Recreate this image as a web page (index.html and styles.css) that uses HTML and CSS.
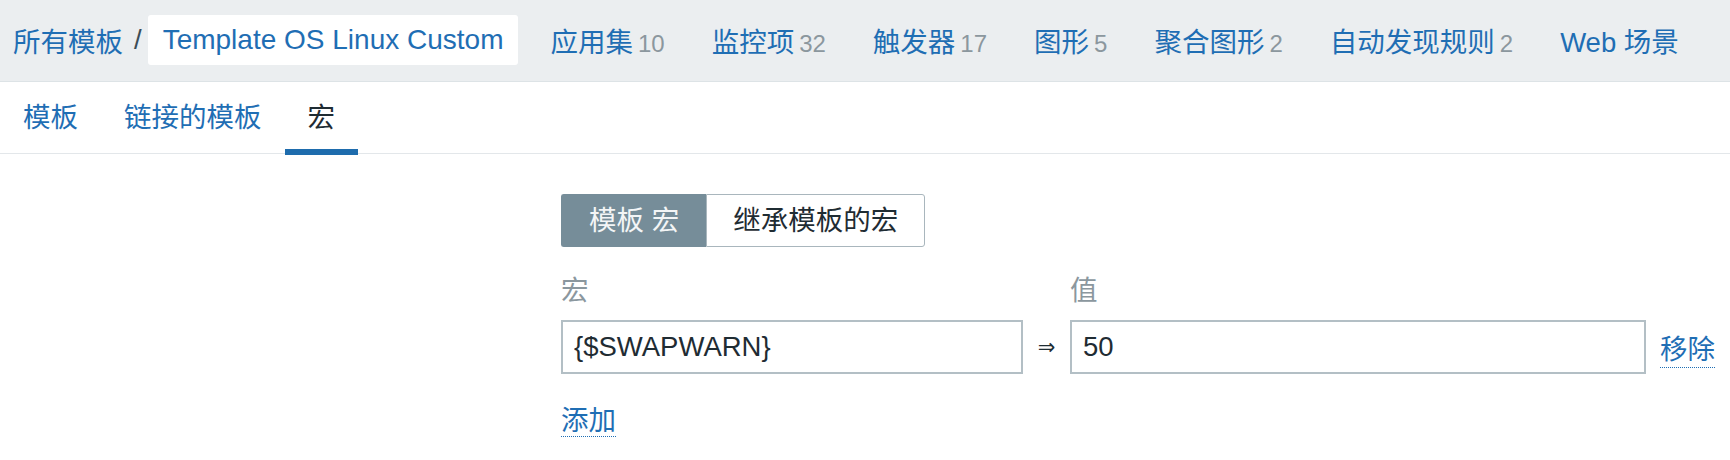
FILE: index.html
```html
<!DOCTYPE html>
<html lang="zh-CN">
<head>
    <meta charset="UTF-8">
    <meta name="viewport" content="width=device-width, initial-scale=1.0">
    <title>模板 - 宏</title>
    <link rel="stylesheet" href="styles.css">
</head>
<body>
    <header class="header-nav">
        <ul class="breadcrumbs">
            <li><a href="#">所有模板</a></li>
            <li class="separator">/</li>
            <li class="selected"><a href="#">Template OS Linux Custom</a></li>
        </ul>
        <ul class="object-nav">
            <li><a href="#">应用集</a><span class="count">10</span></li>
            <li><a href="#">监控项</a><span class="count">32</span></li>
            <li><a href="#">触发器</a><span class="count">17</span></li>
            <li><a href="#">图形</a><span class="count">5</span></li>
            <li><a href="#">聚合图形</a><span class="count">2</span></li>
            <li><a href="#">自动发现规则</a><span class="count">2</span></li>
            <li><a href="#">Web 场景</a></li>
        </ul>
    </header>

    <!-- 标签页 -->
    <ul class="tabs">
        <li class="tab"><a href="#">模板</a></li>
        <li class="tab"><a href="#">链接的模板</a></li>
        <li class="tab active"><span>宏</span></li>
    </ul>

    <div class="tab-content">
        <div class="form-row">
            <div class="form-label"></div>
            <div class="form-field">
                <div class="radio-group">
                    <span class="radio-item checked">模板 宏</span>
                    <span class="radio-item">继承模板的宏</span>
                </div>
            </div>
        </div>

        <div class="form-row">
            <div class="form-label"></div>
            <div class="form-field">
                <div class="macro-table">
                    <div class="col-head">宏</div>
                    <div></div>
                    <div class="col-head">值</div>
                    <div></div>

                    <input class="text-input macro" type="text" value="{$SWAPWARN}">
                    <div class="arrow">&rArr;</div>
                    <input class="text-input value" type="text" value="50">
                    <a href="#" class="link-action remove">移除</a>

                    <div class="add-cell"><a href="#" class="link-action">添加</a></div>
                </div>
            </div>
        </div>
    </div>
</body>
</html>
```

FILE: styles.css
```css
:root {
    --link-color: #1f6eb4;
    --text-color: #1f2c33;
    --muted-color: #8b979e;
    --border-color: #b3bfc5;
    --header-bg: #ebeef0;
}

* {
    box-sizing: border-box;
    margin: 0;
    padding: 0;
}

body {
    font-family: 'Liberation Sans', Arial, 'Noto Sans CJK SC', sans-serif;
    font-size: 27.5px;
    color: var(--text-color);
    background: #fff;
}

a {
    color: var(--link-color);
    text-decoration: none;
}

ul {
    list-style: none;
}

/* Шапка з навігацією */
.header-nav {
    display: flex;
    align-items: center;
    height: 82px;
    padding: 0 0 2px 13px;
    background-color: var(--header-bg);
    border-bottom: 1px solid #dde3e6;
}

.breadcrumbs {
    display: flex;
    align-items: center;
}

.breadcrumbs .separator {
    margin: 0 6px 0 11px;
    color: #3c4d57;
}

.breadcrumbs .selected {
    background: #fff;
    border-radius: 3px;
    font-size: 28px;
    line-height: 50px;
    padding: 0 15px;
}

.object-nav {
    display: flex;
    align-items: center;
    gap: 47px;
    margin-left: 32px;
}

.object-nav .count {
    margin-left: 5px;
    font-size: 24px;
    color: var(--muted-color);
}

/* Вкладки */
.tabs {
    display: flex;
    height: 72px;
    border-bottom: 1px solid #e3e7ea;
}

.tab {
    padding: 3px 23px 0;
    line-height: 66px;
    height: 73px;
    border-bottom: 6px solid transparent;
}

.tab.active {
    border-bottom-color: #1e6cad;
    color: var(--text-color);
}

/* Форма */
.tab-content {
    padding-top: 40px;
}

.form-row {
    display: grid;
    grid-template-columns: 545px 1fr;
    column-gap: 16px;
    margin-bottom: 27px;
}

.radio-group {
    display: inline-flex;
}

.radio-item {
    line-height: 51px;
    padding: 0 26px;
    border: 1px solid #a9b6bd;
    background: #fff;
    color: var(--text-color);
}

.radio-item:first-child {
    border-radius: 3px 0 0 3px;
    border-right: none;
}

.radio-item:last-child {
    border-radius: 0 3px 3px 0;
}

.radio-item.checked {
    background: #768d99;
    border-color: #768d99;
    color: #f3f5f6;
    padding: 0 27px;
}

.macro-table {
    display: grid;
    grid-template-columns: 462px 47px 576px auto;
    align-items: center;
}

.col-head {
    color: var(--muted-color);
    line-height: 34px;
    margin-bottom: 12px;
}

.text-input {
    height: 54px;
    border: 2px solid var(--border-color);
    padding: 0 11px;
    font-family: inherit;
    font-size: 27.5px;
    color: var(--text-color);
    background: #fff;
    outline: none;
}

.arrow {
    font-family: 'DejaVu Sans', sans-serif;
    font-size: 21px;
    text-align: center;
    color: var(--text-color);
}

.link-action {
    border-bottom: 1px dotted var(--link-color);
}

.remove {
    margin-left: 14px;
    justify-self: start;
}

.add-cell {
    grid-column: 1 / -1;
    padding-top: 24px;
}
```
